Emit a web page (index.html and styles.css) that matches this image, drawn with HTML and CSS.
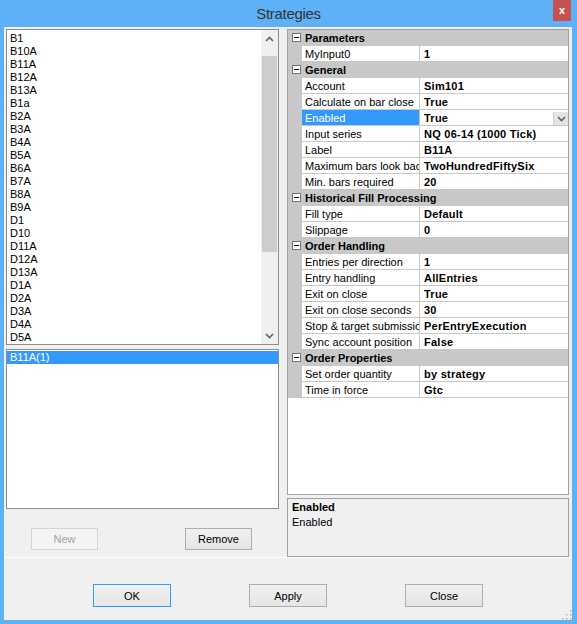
FILE: index.html
```html
<!DOCTYPE html>
<html>
<head>
<meta charset="utf-8">
<title>Strategies</title>
<link rel="stylesheet" href="styles.css">
</head>
<body>
<div class="window">
  <div class="titlebar">
    <span class="title">Strategies</span>
    <span class="close">x</span>
  </div>
  <div class="client">
    <div class="main">
      <div class="left">
        <div class="list strategies">
          <div class="items">
            <div class="item">B1</div>
            <div class="item">B10A</div>
            <div class="item">B11A</div>
            <div class="item">B12A</div>
            <div class="item">B13A</div>
            <div class="item">B1a</div>
            <div class="item">B2A</div>
            <div class="item">B3A</div>
            <div class="item">B4A</div>
            <div class="item">B5A</div>
            <div class="item">B6A</div>
            <div class="item">B7A</div>
            <div class="item">B8A</div>
            <div class="item">B9A</div>
            <div class="item">D1</div>
            <div class="item">D10</div>
            <div class="item">D11A</div>
            <div class="item">D12A</div>
            <div class="item">D13A</div>
            <div class="item">D1A</div>
            <div class="item">D2A</div>
            <div class="item">D3A</div>
            <div class="item">D4A</div>
            <div class="item">D5A</div>
          </div>
          <div class="vscroll">
            <div class="arrow"><svg width="9" height="6" viewBox="0 0 9 6"><polyline points="1,5 4.5,1.5 8,5" fill="none" stroke="#606060" stroke-width="1.6"/></svg></div>
            <div class="track"><div class="thumb"></div></div>
            <div class="arrow"><svg width="9" height="6" viewBox="0 0 9 6"><polyline points="1,1 4.5,4.5 8,1" fill="none" stroke="#606060" stroke-width="1.6"/></svg></div>
          </div>
        </div>
        <div class="list instances">
          <div class="item selected">B11A(1)</div>
        </div>
        <div class="left-buttons">
          <button class="btn disabled">New</button>
          <button class="btn">Remove</button>
        </div>
      </div>
      <div class="splitter"></div>
      <div class="right">
        <div class="grid">
          <div class="row cat"><div class="margin"><span class="expander"></span></div><div class="catname">Parameters</div></div>
          <div class="row"><div class="margin"></div><div class="name">MyInput0</div><div class="value">1</div></div>
          <div class="row cat"><div class="margin"><span class="expander"></span></div><div class="catname">General</div></div>
          <div class="row"><div class="margin"></div><div class="name">Account</div><div class="value">Sim101</div></div>
          <div class="row"><div class="margin"></div><div class="name">Calculate on bar close</div><div class="value">True</div></div>
          <div class="row"><div class="margin"></div><div class="name sel">Enabled</div><div class="value"><span>True</span><span class="dd"><svg width="9" height="6" viewBox="0 0 9 6"><polyline points="1,1 4.5,4.5 8,1" fill="none" stroke="#606060" stroke-width="1.6"/></svg></span></div></div>
          <div class="row"><div class="margin"></div><div class="name">Input series</div><div class="value">NQ 06-14 (1000 Tick)</div></div>
          <div class="row"><div class="margin"></div><div class="name">Label</div><div class="value">B11A</div></div>
          <div class="row"><div class="margin"></div><div class="name">Maximum bars look back</div><div class="value">TwoHundredFiftySix</div></div>
          <div class="row"><div class="margin"></div><div class="name">Min. bars required</div><div class="value">20</div></div>
          <div class="row cat"><div class="margin"><span class="expander"></span></div><div class="catname">Historical Fill Processing</div></div>
          <div class="row"><div class="margin"></div><div class="name">Fill type</div><div class="value">Default</div></div>
          <div class="row"><div class="margin"></div><div class="name">Slippage</div><div class="value">0</div></div>
          <div class="row cat"><div class="margin"><span class="expander"></span></div><div class="catname">Order Handling</div></div>
          <div class="row"><div class="margin"></div><div class="name">Entries per direction</div><div class="value">1</div></div>
          <div class="row"><div class="margin"></div><div class="name">Entry handling</div><div class="value">AllEntries</div></div>
          <div class="row"><div class="margin"></div><div class="name">Exit on close</div><div class="value">True</div></div>
          <div class="row"><div class="margin"></div><div class="name">Exit on close seconds</div><div class="value">30</div></div>
          <div class="row"><div class="margin"></div><div class="name">Stop &amp; target submission</div><div class="value">PerEntryExecution</div></div>
          <div class="row"><div class="margin"></div><div class="name">Sync account position</div><div class="value">False</div></div>
          <div class="row cat"><div class="margin"><span class="expander"></span></div><div class="catname">Order Properties</div></div>
          <div class="row"><div class="margin"></div><div class="name">Set order quantity</div><div class="value">by strategy</div></div>
          <div class="row"><div class="margin"></div><div class="name">Time in force</div><div class="value">Gtc</div></div>
        </div>
        <div class="desc">
          <div class="desc-title">Enabled</div>
          <div class="desc-text">Enabled</div>
        </div>
      </div>
    </div>
    <div class="footer">
      <button class="btn wide default">OK</button>
      <button class="btn wide">Apply</button>
      <button class="btn wide">Close</button>
      <svg class="grip" width="10" height="10" viewBox="0 0 10 10">
        <g fill="#fff">
          <rect x="9" y="1" width="1" height="1"/>
          <rect x="9" y="5" width="1" height="1"/><rect x="5" y="5" width="1" height="1"/>
          <rect x="9" y="9" width="1" height="1"/><rect x="5" y="9" width="1" height="1"/><rect x="1" y="9" width="1" height="1"/>
        </g>
        <g fill="#b0b0b0">
          <rect x="8" y="0" width="1.5" height="1.5"/>
          <rect x="8" y="4" width="1.5" height="1.5"/><rect x="4" y="4" width="1.5" height="1.5"/>
          <rect x="8" y="8" width="1.5" height="1.5"/><rect x="4" y="8" width="1.5" height="1.5"/><rect x="0" y="8" width="1.5" height="1.5"/>
        </g>
      </svg>
    </div>
  </div>
</div>
</body>
</html>
```
FILE: styles.css
```css
* { box-sizing: border-box; }
html, body { margin: 0; padding: 0; }
body {
  width: 577px;
  height: 624px;
  overflow: hidden;
  font-family: "Liberation Sans", Arial, sans-serif;
  font-size: 11px;
  color: #000;
}
.window {
  width: 577px;
  height: 624px;
  background: #5fb1f7;
  display: flex;
  flex-direction: column;
}
.titlebar {
  height: 27px;
  flex: none;
  display: grid;
  grid-template-columns: 1fr auto 1fr;
  align-items: start;
}
.title {
  grid-column: 2;
  font-size: 15px;
  letter-spacing: -0.3px;
  line-height: 27px;
  color: #333;
}
.close {
  grid-column: 3;
  justify-self: end;
  margin-right: 6px;
  width: 18px;
  height: 21px;
  background: #c75050;
  color: #fff;
  font-weight: bold;
  font-size: 11px;
  line-height: 20px;
  text-align: center;
}
.client {
  flex: 1;
  margin: 0 5px 4px 4px;
  background: #f0f0f0;
  display: flex;
  flex-direction: column;
}
.main {
  height: 531px;
  flex: none;
  display: flex;
  padding: 2px 0 0 2px;
  border-bottom: 1px solid #fff;
}
.left {
  width: 273px;
  display: flex;
  flex-direction: column;
}
.list {
  border: 1px solid #8c8f94;
  background: #fff;
  overflow: hidden;
}
.strategies {
  height: 316px;
  display: flex;
}
.items {
  flex: 1;
  padding: 2px 0 0 3px;
  overflow: hidden;
}
.item {
  height: 13px;
  line-height: 13px;
  white-space: nowrap;
}
.vscroll {
  width: 17px;
  background: #f0f0f0;
  display: flex;
  flex-direction: column;
}
.arrow {
  height: 17px;
  display: flex;
  align-items: center;
  justify-content: center;
}
.track {
  flex: 1;
  padding: 9px 1px 0 1px;
}
.thumb {
  height: 196px;
  background: #cdcdcd;
}
.instances {
  height: 160px;
  margin-top: 4px;
  padding-top: 1px;
}
.selected {
  background: #3399ff;
  color: #fff;
  padding-left: 3px;
}
.left-buttons {
  margin-top: 19px;
  display: flex;
  padding-left: 25px;
  gap: 87px;
}
.btn {
  font-family: "Liberation Sans", Arial, sans-serif;
  font-size: 11px;
  color: #000;
  width: 67px;
  height: 22px;
  padding: 0;
  border: 1px solid #adadad;
  background: linear-gradient(#f0f0f0, #e5e5e5);
  border-radius: 0;
}
.btn.disabled {
  color: #a0a0a0;
  border-color: #d5d5d5;
  background: #f4f4f4;
}
.btn.wide {
  width: 78px;
  height: 23px;
}
.btn.default {
  border-color: #3399ff;
}
.splitter {
  width: 8px;
}
.right {
  width: 282px;
  display: flex;
  flex-direction: column;
}
.grid {
  height: 466px;
  border: 1px solid #a0a0a0;
  background: #fff;
  overflow: hidden;
}
.row {
  height: 16px;
  display: grid;
  grid-template-columns: 14px 118px 1fr;
  border-bottom: 1px solid #c8c8c8;
}
.row.cat {
  grid-template-columns: 14px 1fr;
  background: #c8c8c8;
}
.margin {
  background: #c8c8c8;
}
.expander {
  display: block;
  width: 9px;
  height: 9px;
  margin: 3px 0 0 4px;
  border: 1px solid #777;
  background: #fff;
  position: relative;
}
.expander::after {
  content: "";
  position: absolute;
  left: 1px;
  top: 3px;
  width: 5px;
  height: 1px;
  background: #000;
}
.name, .value, .catname {
  padding: 1px 0 0 3px;
  line-height: 15px;
  height: 15px;
  white-space: nowrap;
  overflow: hidden;
}
.name {
  border-right: 1px solid #c8c8c8;
}
.name.sel {
  background: #3399ff;
  color: #fff;
}
.catname, .value {
  font-weight: bold;
}
.value {
  padding-left: 4px;
  letter-spacing: 0.25px;
  display: flex;
}
.dd {
  margin-left: auto;
  margin-top: 1px;
  width: 15px;
  height: 14px;
  background: #e3e3e3;
  border-left: 1px solid #d0d0d0;
  display: flex;
  align-items: center;
  justify-content: center;
}
.desc {
  height: 59px;
  margin-top: 3px;
  border: 1px solid #a0a0a0;
  background: #f0f0f0;
  padding: 1px 4px 0 4px;
  line-height: 15px;
}
.desc-title {
  font-weight: bold;
}
.footer {
  flex: 1;
  display: flex;
  align-items: flex-start;
  padding: 26px 0 0 89px;
  gap: 78px;
}
.grip {
  margin-left: auto;
  align-self: flex-end;
}
```
